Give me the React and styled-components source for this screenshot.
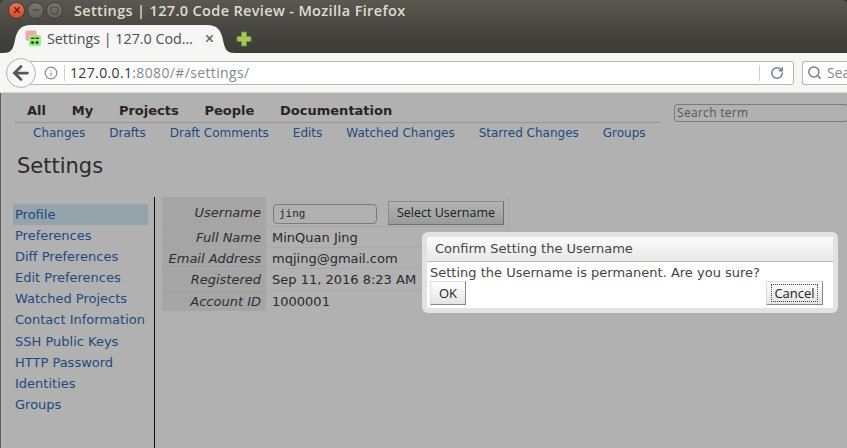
import styled, { createGlobalStyle } from 'styled-components'
import { X, Minus, Square, ArrowLeft, Info, RotateCw, Search } from 'lucide-react'

const topMenu = ['All', 'My', 'Projects', 'People', 'Documentation']
const subMenu = ['Changes', 'Drafts', 'Draft Comments', 'Edits', 'Watched Changes', 'Starred Changes', 'Groups']
const sideMenu = [
  'Profile',
  'Preferences',
  'Diff Preferences',
  'Edit Preferences',
  'Watched Projects',
  'Contact Information',
  'SSH Public Keys',
  'HTTP Password',
  'Identities',
  'Groups',
]

const App = () => {
  return (
    <Window>
      <GlobalStyle />
      <TitleBar>
        <WindowButtons>
          <WindowButton $close>
            <X size={10} strokeWidth={3} />
          </WindowButton>
          <WindowButton>
            <Minus size={10} strokeWidth={2.5} />
          </WindowButton>
          <WindowButton>
            <Square size={9} strokeWidth={2} />
          </WindowButton>
        </WindowButtons>
        <WindowTitle>Settings | 127.0 Code Review - Mozilla Firefox</WindowTitle>
      </TitleBar>
      <TabStrip>
        <Tab>
          <Favicon viewBox="0 0 16 16">
            <rect x="0.5" y="0.5" width="11" height="10" rx="1.5" fill="#f4a6a6" />
            <rect x="4" y="5" width="12" height="11" rx="1.5" fill="#8ef28a" />
            <rect x="6" y="7.5" width="3.5" height="1.5" fill="#b01010" />
            <rect x="10.5" y="7.5" width="3.5" height="1.5" fill="#b01010" />
            <circle cx="7.5" cy="12.5" r="1.6" fill="#145214" />
            <circle cx="12" cy="12.5" r="1.6" fill="#145214" />
          </Favicon>
          <TabLabel>Settings | 127.0 Cod…</TabLabel>
          <TabClose>
            <X size={11} strokeWidth={3.5} />
          </TabClose>
        </Tab>
        <NewTab viewBox="0 0 16 16">
          <path
            d="M5.5 1h5v4.500H15v5h-4.500V15h-5v-4.500H1v-5h4.500z"
            fill="#a5c85a"
            stroke="#6f8f35"
            strokeWidth="0.8"
          />
        </NewTab>
      </TabStrip>
      <NavBar>
        <BackButton>
          <ArrowLeft size={22} strokeWidth={3} />
        </BackButton>
        <UrlBar>
          <Info size={14} color="#8a8a8a" />
          <UrlDivider />
          <Url>
            127.0.0.1<UrlRest>:8080/#/settings/</UrlRest>
          </Url>
          <ReloadSlot>
            <RotateCw size={14} strokeWidth={2.6} color="#76808c" />
          </ReloadSlot>
        </UrlBar>
        <SearchBar>
          <Search size={15} strokeWidth={2.4} color="#76808c" />
          <span>Search</span>
        </SearchBar>
      </NavBar>
      <Page>
        <MenuArea>
          <TopMenu>
            {topMenu.map(item => (
              <TopItem key={item}>{item}</TopItem>
            ))}
          </TopMenu>
          <SubMenu>
            {subMenu.map(item => (
              <SubItem key={item}>{item}</SubItem>
            ))}
          </SubMenu>
          <SearchTerm>Search term</SearchTerm>
        </MenuArea>
        <Heading>Settings</Heading>
        <Columns>
          <SideNav>
            {sideMenu.map((item, i) => (
              <SideItem key={item} $active={i === 0}>
                {item}
              </SideItem>
            ))}
          </SideNav>
          <Content>
            <InfoTable>
              <Row>
                <Label>Username</Label>
                <Value>
                  <NameInput>jing</NameInput>
                  <SelectButton>Select Username</SelectButton>
                </Value>
              </Row>
              <Row>
                <Label>Full Name</Label>
                <Value>MinQuan Jing</Value>
              </Row>
              <Row>
                <Label>Email Address</Label>
                <Value>mqjing@gmail.com</Value>
              </Row>
              <Row>
                <Label>Registered</Label>
                <Value>Sep 11, 2016 8:23 AM</Value>
              </Row>
              <Row $last>
                <Label>Account ID</Label>
                <Value>1000001</Value>
              </Row>
            </InfoTable>
          </Content>
        </Columns>
        <Dialog>
          <DialogInner>
            <DialogHeader>Confirm Setting the Username</DialogHeader>
            <DialogBody>
              <DialogText>Setting the Username is permanent. Are you sure?</DialogText>
              <DialogActions>
                <DialogButton>OK</DialogButton>
                <DialogButton $focused>
                  <span>Cancel</span>
                </DialogButton>
              </DialogActions>
            </DialogBody>
          </DialogInner>
        </Dialog>
      </Page>
    </Window>
  )
}

const GlobalStyle = createGlobalStyle`
  html, body {
    margin: 0;
    padding: 0;
    height: 100%;
    overflow: hidden;
    background: #3c3b36;
  }
`

const Window = styled.div`
  width: 847px;
  height: 448px;
  display: flex;
  flex-direction: column;
  overflow: hidden;
  font-family: 'DejaVu Sans', sans-serif;
`

const TitleBar = styled.div`
  height: 25px;
  flex: none;
  box-sizing: border-box;
  padding-bottom: 5px;
  display: flex;
  align-items: center;
  background: linear-gradient(#5a5850, #4a4842);
  border-radius: 5px 5px 0 0;
`

const WindowButtons = styled.div`
  display: flex;
  gap: 2px;
  margin-left: 8px;
  width: 66px;
`

const WindowButton = styled.div`
  width: 17px;
  height: 17px;
  box-sizing: border-box;
  border-radius: 50%;
  display: flex;
  align-items: center;
  justify-content: center;
  background: ${props => (props.$close ? 'linear-gradient(#ee7350, #d9482a)' : 'linear-gradient(#78766e, #63615a)')};
  color: ${props => (props.$close ? '#4a2318' : '#3f3e38')};
  border: 1px solid #3c3b36;
`

const WindowTitle = styled.div`
  font-family: 'Open Sans', sans-serif;
  font-weight: 600;
  font-size: 14.500px;
  color: #dfdbd2;
  letter-spacing: 0.35px;
  white-space: nowrap;
`

const TabStrip = styled.div`
  height: 28px;
  flex: none;
  display: flex;
  align-items: flex-end;
  padding-left: 3px;
  background: linear-gradient(#4a4842, #3c3b36);
`

const Tab = styled.div`
  width: 232px;
  height: 28px;
  flex: none;
  box-sizing: border-box;
  display: flex;
  align-items: center;
  padding: 0 0 2px 22px;
  background: #f6f6f4;
  clip-path: path('M0 28 C8 28 10 25 12 15 C14 5 18 0 28 0 L204 0 C214 0 218 5 220 15 C222 25 224 28 232 28 Z');
`

const Favicon = styled.svg`
  width: 16px;
  height: 16px;
  flex: none;
`

const TabLabel = styled.span`
  margin-left: 6px;
  font-family: 'Open Sans', sans-serif;
  font-size: 14.300px;
  color: #4a4f55;
  white-space: nowrap;
  width: 152px;
`

const TabClose = styled.span`
  display: flex;
  color: #66665f;
  margin-left: 5px;
`

const NewTab = styled.svg`
  width: 16px;
  height: 16px;
  margin: 0 0 6px 1px;
`

const NavBar = styled.div`
  height: 40px;
  flex: none;
  box-sizing: border-box;
  position: relative;
  display: flex;
  align-items: center;
  padding: 0 0 0 30px;
  background: #f6f6f4;
  border-bottom: 1px solid #d8d8d4;
`

const BackButton = styled.div`
  position: absolute;
  left: 6px;
  top: 5px;
  width: 30px;
  height: 30px;
  box-sizing: border-box;
  border-radius: 50%;
  border: 1px solid #b5b5b0;
  background: #f8f8f6;
  display: flex;
  align-items: center;
  justify-content: center;
  color: #55565a;
`

const UrlBar = styled.div`
  width: 764px;
  height: 24px;
  box-sizing: border-box;
  flex: none;
  display: flex;
  align-items: center;
  padding-left: 13px;
  background: #fff;
  border: 1px solid #b9b7b0;
  border-radius: 0 3px 3px 0;
`

const UrlDivider = styled.div`
  width: 1px;
  height: 16px;
  margin: 0 5px 0 6px;
  background: #cfcfcb;
`

const Url = styled.div`
  flex: 1;
  font-family: 'Open Sans', sans-serif;
  font-size: 14px;
  letter-spacing: 0.36px;
  color: #33363a;
`

const UrlRest = styled.span`
  color: #85888c;
`

const ReloadSlot = styled.div`
  width: 33px;
  height: 16px;
  display: flex;
  align-items: center;
  justify-content: center;
  border-left: 1px solid #cfcfcb;
`

const SearchBar = styled.div`
  flex: none;
  width: 60px;
  height: 24px;
  box-sizing: border-box;
  margin-left: 8px;
  display: flex;
  align-items: center;
  gap: 5px;
  padding-left: 4px;
  background: #fff;
  border: 1px solid #b9b7b0;
  border-right: none;
  border-radius: 3px 0 0 3px;
  font-family: 'Open Sans', sans-serif;
  font-size: 14px;
  color: #85888c;

  svg,
  span {
    flex: none;
  }
`

const Page = styled.div`
  flex: 1;
  position: relative;
  display: flex;
  flex-direction: column;
  background: #b1b1b1;
  border-left: 1px solid #5c5c5c;
  color: #2a2a2a;
`

const MenuArea = styled.div`
  position: relative;
  height: 37px;
  padding: 8px 0 0 13px;
`

const TopMenu = styled.div`
  width: 647px;
  height: 22px;
  box-sizing: border-box;
  display: flex;
  gap: 25.750px;
  padding-left: 13px;
  border-bottom: 1px solid #979797;
  font-size: 13px;
  font-weight: 700;
  line-height: 19px;
`

const TopItem = styled.span`
  color: #2a2522;
`

const SubMenu = styled.div`
  display: flex;
  gap: 24px;
  padding: 2px 0 0 19px;
  font-size: 12px;
  line-height: 16px;
`

const SubItem = styled.span`
  color: #1d4a80;
`

const SearchTerm = styled.div`
  position: absolute;
  left: 673px;
  top: 11px;
  width: 174px;
  height: 18px;
  box-sizing: border-box;
  padding-left: 2px;
  border: 1px solid #7c7c7c;
  border-radius: 3px;
  font-family: 'Open Sans', sans-serif;
  font-size: 12px;
  line-height: 16px;
  color: #565656;
  letter-spacing: 0.3px;
`

const Heading = styled.h1`
  margin: 13px 0 0 16px;
  height: 46px;
  font-size: 21px;
  font-weight: 400;
  line-height: 30px;
  color: #2e2a28;
`

const Columns = styled.div`
  flex: 1;
  display: flex;
  min-height: 0;
`

const SideNav = styled.div`
  width: 154px;
  flex: none;
  box-sizing: border-box;
  padding: 7px 6px 0 12px;
  border-right: 1px solid #0c0c0c;
`

const SideItem = styled.div`
  height: 21.100px;
  box-sizing: border-box;
  padding: 0 0 0 2px;
  font-size: 13px;
  line-height: 21px;
  white-space: nowrap;
  color: #1d4a80;
  background: ${props => (props.$active ? '#94a3ac' : 'transparent')};
`

const Content = styled.div`
  padding-left: 7px;
`

const InfoTable = styled.div`
  width: 347px;
  background: #a5a5a5;
`

const Row = styled.div`
  display: flex;
  min-height: 21px;
  box-sizing: border-box;
  border-bottom: ${props => (props.$last ? 'none' : '1px solid #a9a9a9')};
  font-size: 13px;
  line-height: 19px;
`

const Label = styled.div`
  width: 104px;
  flex: none;
  box-sizing: border-box;
  padding: 1px 5px 0 0;
  display: flex;
  align-items: center;
  justify-content: flex-end;
  font-style: italic;
  color: #2e2e2e;
  white-space: nowrap;
`

const Value = styled.div`
  flex: 1;
  display: flex;
  align-items: center;
  gap: 11px;
  padding: 1px 0 0 6px;
  background: #b1b1b1;
  border-right: 1px solid #a9a9a9;
  color: #2a2a2a;
  white-space: nowrap;
`

const NameInput = styled.div`
  width: 104px;
  height: 20px;
  box-sizing: border-box;
  margin: 3px 0 0 1px;
  padding-left: 5px;
  border: 1px solid #7a7a7a;
  border-radius: 4px;
  font-family: 'DejaVu Sans Mono', monospace;
  font-size: 11px;
  line-height: 18px;
`

const SelectButton = styled.div`
  width: 116px;
  height: 24px;
  margin: 3px 0 1px;
  box-sizing: border-box;
  text-align: center;
  font-family: 'Open Sans', sans-serif;
  font-size: 12.500px;
  line-height: 22px;
  color: #202020;
  background: linear-gradient(#b4b4b4, #9a9a9a);
  border: 1px solid #8a8a8a;
  border-right-color: #6e6e6e;
  border-bottom-color: #6e6e6e;
`

const Dialog = styled.div`
  position: absolute;
  left: 421px;
  top: 139px;
  width: 416px;
  height: 81px;
  box-sizing: border-box;
  padding: 5px;
  background: #e2e2e2;
  border-radius: 6px;
`

const DialogInner = styled.div`
  background: #fff;
  height: 100%;
`

const DialogHeader = styled.div`
  height: 25px;
  box-sizing: border-box;
  padding-left: 8px;
  background: linear-gradient(#fbfbfb, #e8e8e8);
  border-bottom: 1px solid #bbb;
  font-size: 13px;
  line-height: 23px;
  color: #444;
`

const DialogBody = styled.div`
  padding: 2px 10px 0 3px;
`

const DialogText = styled.div`
  font-size: 13px;
  line-height: 17px;
  color: #444;
`

const DialogActions = styled.div`
  display: flex;
  justify-content: space-between;
`

const DialogButton = styled.div`
  height: 24px;
  box-sizing: border-box;
  display: flex;
  align-items: center;
  justify-content: center;
  font-family: 'Open Sans', sans-serif;
  font-size: 13px;
  color: #222;
  background: linear-gradient(#fff, #e4e4e4);
  border: 1px solid #ddd;
  border-right-color: #888;
  border-bottom-color: #888;
  width: ${props => (props.$focused ? '57px' : '36px')};

  span {
    outline: 1px dotted #444;
    padding: 0 2px;
    line-height: 16px;
  }
`

export default App
